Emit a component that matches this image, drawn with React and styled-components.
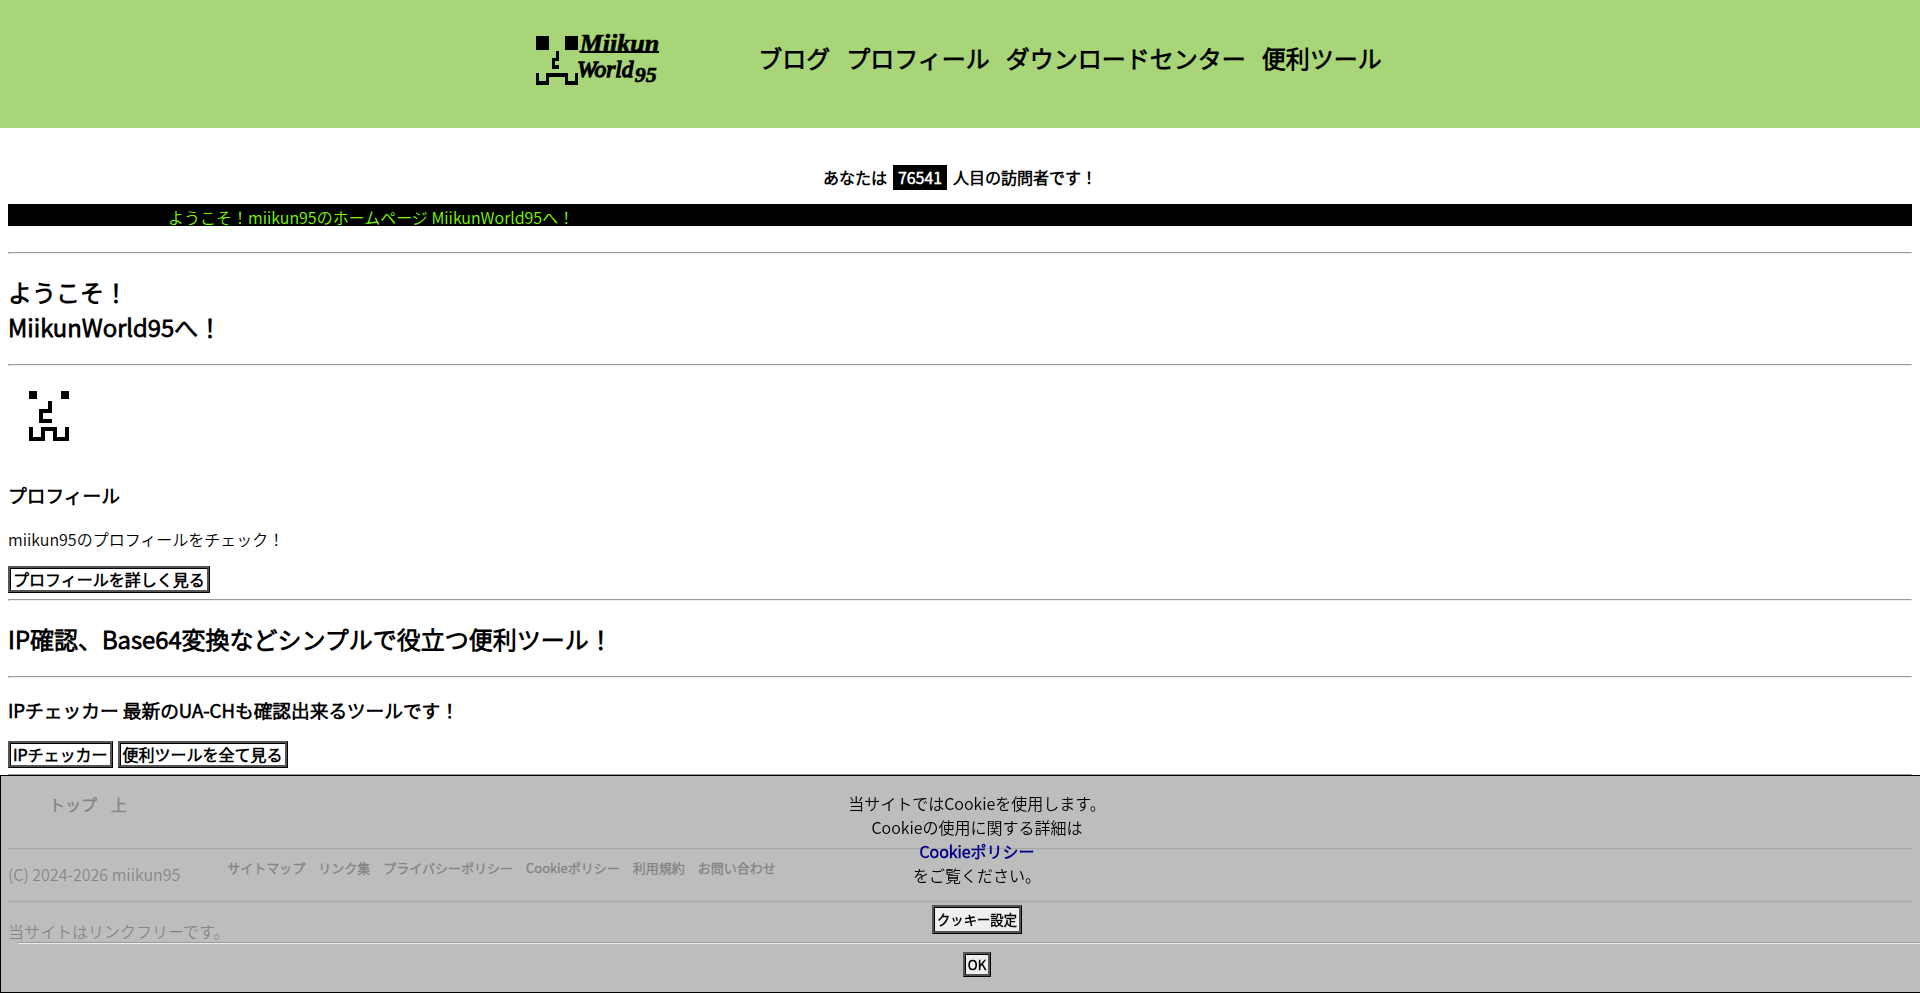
import React from 'react'
import styled, { createGlobalStyle } from 'styled-components'

const GlobalStyle = createGlobalStyle`
    body {
        margin: 0;
        background: #fff;
        color: #000;
        font-family: "Noto Sans CJK JP DemiLight", "Noto Sans CJK JP", sans-serif;
        font-size: 16px;
    }
    a {
        color: inherit;
        font-weight: bold;
        text-decoration: none;
    }
`

const HeaderStyled = styled.header`
    display: flex;
    justify-content: center;
    align-items: center;
    gap: 92px;
    padding: 31px 2px 45px 0;
    background: #a7d577;
    .logo {
        display: block;
        height: 52px;
    }
`

const NavList = styled.ul`
    display: flex;
    gap: ${(props) => props.$gap}px;
    margin: 0;
    padding: 0;
    list-style: none;
    font-size: ${(props) => props.$size}px;
`

const Main = styled.main`
    padding: 37px 8px 0;
`

const Visitor = styled.p`
    display: flex;
    justify-content: center;
    gap: 6px;
    margin: 0 0 14px;
    line-height: 25px;
    font-weight: bold;
    .count {
        padding: 0 5px;
        background: #000;
        color: #fff;
    }
`

const Marquee = styled.div`
    height: 22px;
    margin-bottom: 26px;
    padding-left: 160px;
    background: #000;
    color: #7cfc00;
    line-height: 26px;
    white-space: nowrap;
`

const Line = styled.hr`
    margin: 8px 0;
`

const Title = styled.h2`
    margin: 20px 0;
    font-size: 24px;
    line-height: 35px;
`

const Avatar = styled.svg`
    display: block;
    width: 80px;
    height: 89px;
`

const SubTitle = styled.h3`
    margin: 18px 0 19px;
    line-height: 27px;
`

const Text = styled.p`
    margin: 16px 0;
    line-height: 24px;
`

const BtnRow = styled.div`
    display: flex;
    align-items: center;
    gap: 5px;
    height: 24px;
`

const LinkBtn = styled.a`
    padding: 0 2px;
    border: 3px ridge #000;
    background: #fff;
    line-height: 21px;
`

const FooterStyled = styled.footer`
    padding: 0 8px;
    .page-nav {
        padding: 8px 41px 24px;
    }
    .copy {
        display: flex;
        align-items: flex-start;
        gap: 47px;
        padding: 4px 0 7px;
        line-height: 24px;
    }
    .copy a {
        display: block;
        line-height: 12px;
    }
`

const CookieBanner = styled.section`
    position: fixed;
    left: 0;
    bottom: 0;
    width: 100%;
    padding: 15px 14px 15px 16px;
    border: 1px solid #000;
    background: rgba(170, 170, 170, 0.78);
    text-align: center;
    p {
        margin: 0 0 18px;
        line-height: 24px;
    }
    p a {
        display: block;
        color: #00008b;
    }
`

const CookieBtn = styled.button`
    display: block;
    margin: 0 auto;
    padding: 0 2px;
    border: 3px ridge #000;
    background: #efefef;
    color: #000;
    font-family: inherit;
    font-weight: bold;
    line-height: ${(props) => (props.$tall ? 23 : 19)}px;
`

function Nav({ items, gap, size, ...rest }) {
    return (
        <nav {...rest}>
            <NavList $gap={gap} $size={size}>
                {items.map((item) => (
                    <li key={item}>
                        <a href="#">{item}</a>
                    </li>
                ))}
            </NavList>
        </nav>
    )
}

function Logo() {
    return (
        <svg className="logo" width="130" height="52" viewBox="48 33 390 156" overflow="visible" role="img" aria-label="Miikun World 95">
            <g shapeRendering="crispEdges">
                <path d="M48 48h39v42H48zM135 48h39v42h-39z" />
                <path d="M107 92h9v30h-10v14h10v11H97v-34h10z" />
                <path d="M48 159h9v23h21v-23h67v23h21v-23h8v35h-38v-24H87v24H48z" />
            </g>
            <g fontFamily="Liberation Serif, serif" fontStyle="italic" fontWeight="bold" stroke="#000" strokeWidth="2">
                <text x="179" y="96" fontSize="78">Miikun</text>
                <text x="172" y="170" fontSize="70" fontWeight="normal" strokeWidth="4">World</text>
                <text x="344" y="187" fontSize="66">95</text>
            </g>
            <path d="M180 93h237v6H180z" />
        </svg>
    )
}

export default function App() {
    return (
        <>
            <GlobalStyle />
            <HeaderStyled>
                <a href="#">
                    <Logo />
                </a>
                <Nav
                    items={['ブログ', 'プロフィール', 'ダウンロードセンター', '便利ツール']}
                    gap={16}
                    size={24}
                />
            </HeaderStyled>
            <Main>
                <Visitor>
                    <span>あなたは</span>
                    <span className="count">76541</span>
                    <span>人目の訪問者です！</span>
                </Visitor>
                <Marquee>ようこそ！miikun95のホームページ MiikunWorld95へ！</Marquee>
                <Line />
                <Title>
                    ようこそ！
                    <br />
                    MiikunWorld95へ！
                </Title>
                <Line />
                <Avatar viewBox="24 42 240 267" shapeRendering="crispEdges" role="img" aria-label="miikun95">
                    <path d="M87 93h24v24H87zM183 93h24v24h-24z" />
                    <path d="M144 124h12v35h-27v18h27v12h-39v-42h27z" />
                    <path d="M87 201h12v30h24v-30h48v30h24v-30h12v42h-48v-30h-23v30H87z" />
                </Avatar>
                <SubTitle>プロフィール</SubTitle>
                <Text>miikun95のプロフィールをチェック！</Text>
                <BtnRow>
                    <LinkBtn href="#">プロフィールを詳しく見る</LinkBtn>
                </BtnRow>
                <Line />
                <Title>IP確認、Base64変換などシンプルで役立つ便利ツール！</Title>
                <Line />
                <SubTitle>IPチェッカー 最新のUA-CHも確認出来るツールです！</SubTitle>
                <BtnRow>
                    <LinkBtn href="#">IPチェッカー</LinkBtn>
                    <LinkBtn href="#">便利ツールを全て見る</LinkBtn>
                </BtnRow>
                <Line />
            </Main>
            <FooterStyled>
                <Nav className="page-nav" items={['トップ', '上']} gap={14} size={16} />
                <Line />
                <div className="copy">
                    <span>(C) 2024-2026 miikun95</span>
                    <Nav
                        items={['サイトマップ', 'リンク集', 'プライバシーポリシー', 'Cookieポリシー', '利用規約', 'お問い合わせ']}
                        gap={13}
                        size={13}
                    />
                </div>
                <Line />
                <Text>当サイトはリンクフリーです。</Text>
            </FooterStyled>
            <CookieBanner>
                <p>
                    当サイトではCookieを使用します。
                    <br />
                    Cookieの使用に関する詳細は
                    <a href="#">Cookieポリシー</a>
                    をご覧ください。
                </p>
                <CookieBtn type="button" $tall>
                    クッキー設定
                </CookieBtn>
                <Line />
                <CookieBtn type="button">OK</CookieBtn>
            </CookieBanner>
        </>
    )
}
